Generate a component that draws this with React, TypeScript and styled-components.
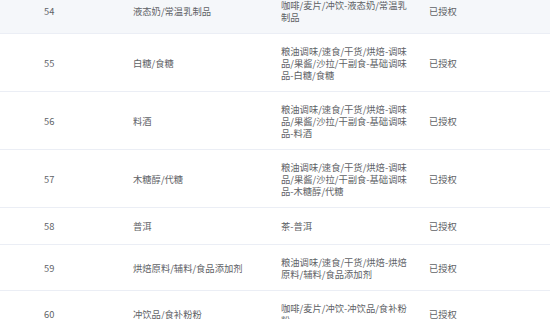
import React from "react";
import styled, { createGlobalStyle } from "styled-components";

const GlobalStyle = createGlobalStyle`
  html, body {
    margin: 0;
    padding: 0;
    background: #ffffff;
    overflow: hidden;
  }
  body {
    font-family: "Noto Sans CJK SC", "Noto Sans", sans-serif;
  }
`;

const Viewport = styled.div`
  width: 550px;
  height: 319px;
  overflow: hidden;
`;

const Scroller = styled.div`
  margin-top: -12px;
`;

const Table = styled.table`
  width: 550px;
  border-collapse: collapse;
  table-layout: fixed;
  font-size: 9.3px;
  color: #606266;
`;

const Row = styled.tr<{ $hover?: boolean }>`
  background: ${(p) => (p.$hover ? "#f5f7fa" : "#ffffff")};
  border-bottom: 1px solid #ebeef5;
`;

const Cell = styled.td<{ $first?: boolean }>`
  padding: 10.5px 10px 10.5px ${(p) => (p.$first ? "44px" : "10px")};
  vertical-align: middle;
`;

const Content = styled.div`
  min-height: 15px;
  display: flex;
  align-items: center;
  line-height: 12px;
  word-break: break-all;
`;

type Item = { id: number; name: string; path: string; status: string };

const items: Item[] = [
  { id: 54, name: "液态奶/常温乳制品", path: "咖啡/麦片/冲饮-液态奶/常温乳制品", status: "已授权" },
  { id: 55, name: "白糖/食糖", path: "粮油调味/速食/干货/烘焙-调味品/果酱/沙拉/干副食-基础调味品-白糖/食糖", status: "已授权" },
  { id: 56, name: "料酒", path: "粮油调味/速食/干货/烘焙-调味品/果酱/沙拉/干副食-基础调味品-料酒", status: "已授权" },
  { id: 57, name: "木糖醇/代糖", path: "粮油调味/速食/干货/烘焙-调味品/果酱/沙拉/干副食-基础调味品-木糖醇/代糖", status: "已授权" },
  { id: 58, name: "普洱", path: "茶-普洱", status: "已授权" },
  { id: 59, name: "烘焙原料/辅料/食品添加剂", path: "粮油调味/速食/干货/烘焙-烘焙原料/辅料/食品添加剂", status: "已授权" },
  { id: 60, name: "冲饮品/食补粉粉", path: "咖啡/麦片/冲饮-冲饮品/食补粉粉", status: "已授权" },
];

export default function App() {
  return (
    <>
      <GlobalStyle />
      <Viewport>
        <Scroller>
          <Table>
            <colgroup>
              <col style={{ width: 123 }} />
              <col style={{ width: 148 }} />
              <col style={{ width: 148 }} />
              <col />
            </colgroup>
            <tbody>
              {items.map((it, i) => (
                <Row key={it.id} $hover={i === 0}>
                  <Cell $first>
                    <Content>{it.id}</Content>
                  </Cell>
                  <Cell>
                    <Content>{it.name}</Content>
                  </Cell>
                  <Cell>
                    <Content>{it.path}</Content>
                  </Cell>
                  <Cell>
                    <Content>{it.status}</Content>
                  </Cell>
                </Row>
              ))}
            </tbody>
          </Table>
        </Scroller>
      </Viewport>
    </>
  );
}
